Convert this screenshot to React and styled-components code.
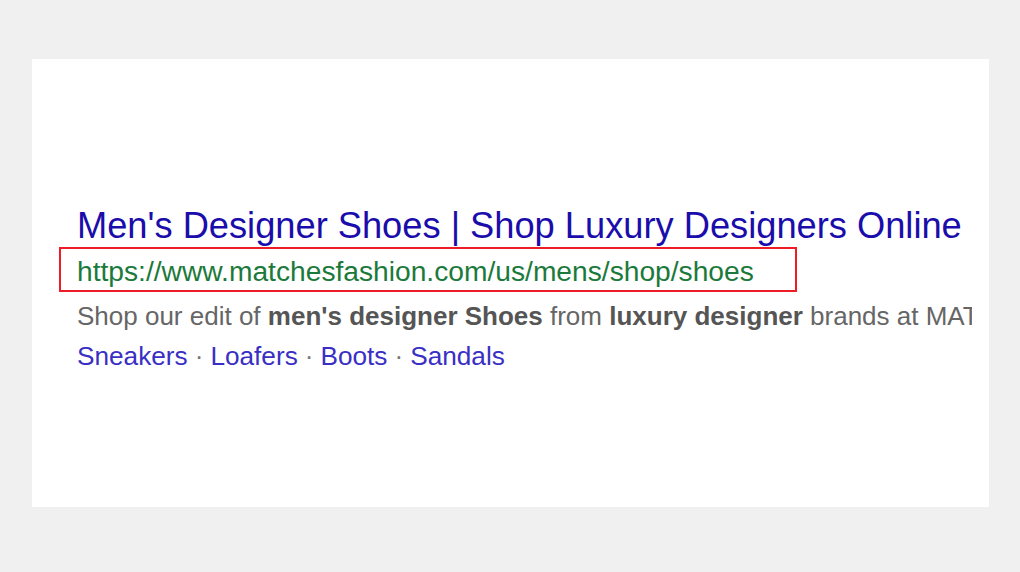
import styled, { createGlobalStyle } from "styled-components"

const Global = createGlobalStyle`
  html, body {
    margin: 0;
    padding: 0;
    background: #f0f0f0;
    font-family: "Liberation Sans", Arial, sans-serif;
  }
`

let Page = styled.div`
  width: 1020px;
  height: 572px;
  padding: 59px 31px 65px 32px;
  box-sizing: border-box;
`
let Card = styled.div`
  background: #fff;
  height: 100%;
  padding: 145px 17px 0 45px;
  box-sizing: border-box;
`
let Result = styled.div`
  display: flex;
  flex-flow: column;
  white-space: nowrap;
`
let Title = styled.div`
  color: #1a0dab;
  font-size: 36.25px;
  line-height: 44px;
`
let UrlRow = styled.div`
  position: relative;
  color: #1b7a3b;
  font-size: 28.2px;
  line-height: 46px;
`
let Highlight = styled.span`
  position: absolute;
  left: -18px;
  top: -1px;
  width: 738px;
  height: 45px;
  border: 2px solid #ee1c24;
  box-sizing: border-box;
`
let Snippet = styled.div`
  color: #666;
  font-size: 26px;
  line-height: 44px;
  overflow: hidden;
  b { color: #555; }
`
let Links = styled.div`
  color: #3a2fc4;
  font-size: 26.2px;
  line-height: 36px;
`
let Dot = styled.span`
  color: #777;
  margin: 0 7px;
`

export default function App () {
  return (
    <Page>
      <Global/>
      <Card>
        <Result>
          <Title>Men's Designer Shoes | Shop Luxury Designers Online</Title>
          <UrlRow>
            https://www.matchesfashion.com/us/mens/shop/shoes
            <Highlight/>
          </UrlRow>
          <Snippet>
            Shop our edit of <b>men's designer Shoes</b> from <b>luxury designer</b> brands at MATCHESFASHION.COM
          </Snippet>
          <Links>
            Sneakers<Dot>·</Dot>Loafers<Dot>·</Dot>Boots<Dot>·</Dot>Sandals
          </Links>
        </Result>
      </Card>
    </Page>
  )
}
